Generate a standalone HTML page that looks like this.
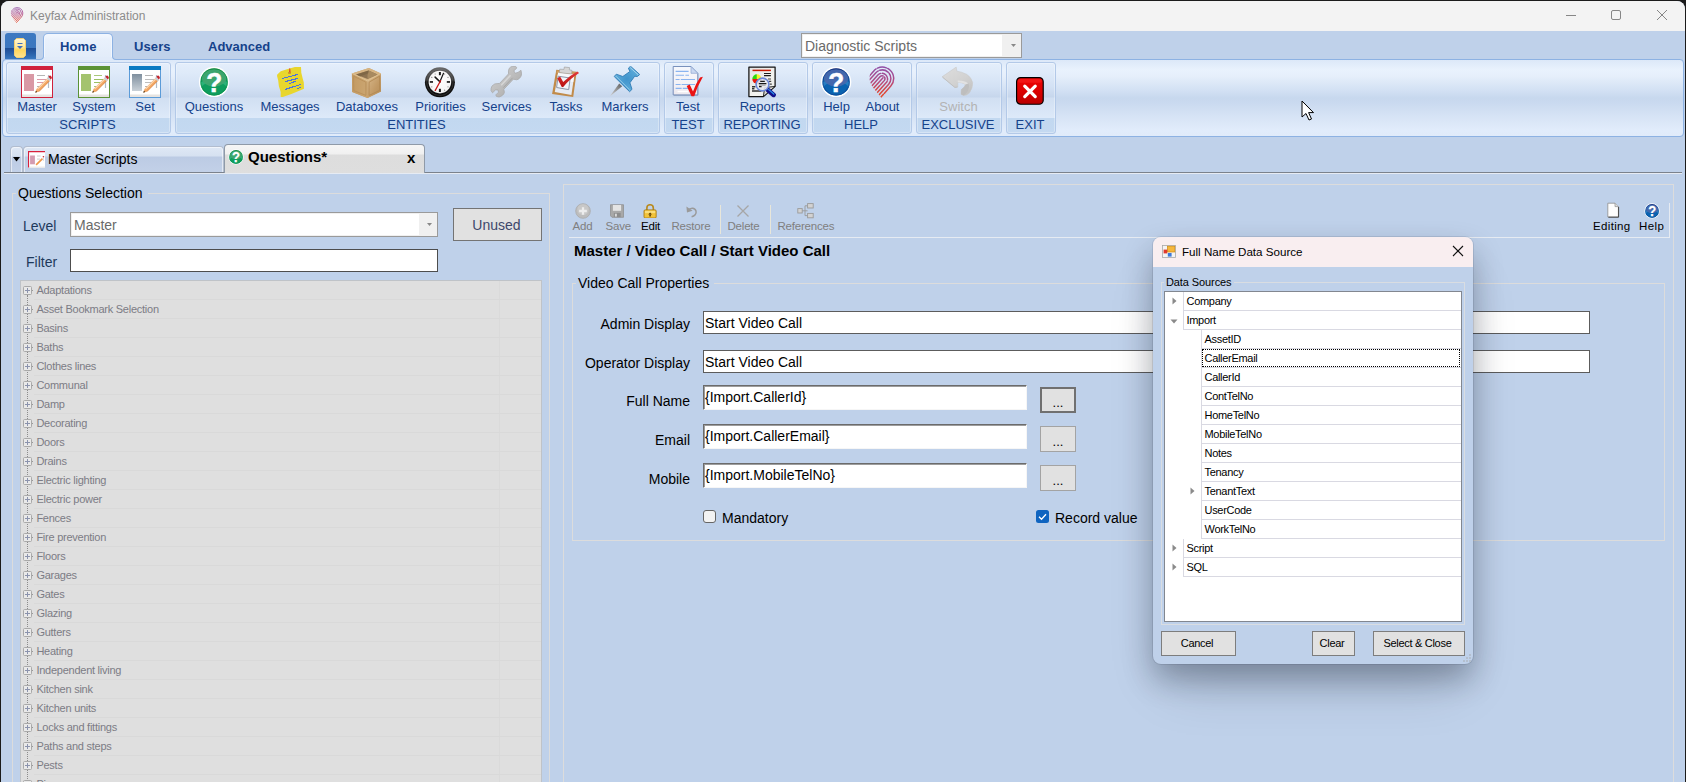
<!DOCTYPE html>
<html><head><meta charset="utf-8"><title>Keyfax Administration</title>
<style>
*{box-sizing:border-box;margin:0;padding:0}
html,body{width:1686px;height:782px;overflow:hidden;background:#1b1b1b}
body{position:relative;font-family:"Liberation Sans",sans-serif;font-size:13px;color:#000}
.a{position:absolute}
.t{position:absolute;white-space:pre;line-height:1}
#win{left:1px;top:1px;width:1684px;height:800px;background:#bfd1ea;border-radius:8px 8px 0 0;overflow:hidden}
#title{left:0;top:0;width:1684px;height:30px;background:#f3f3f3}
.rt{color:#15428b;font-size:13px}
.grp{position:absolute;top:62px;height:72px;border:1px solid #b3c9e8;border-radius:3px;box-shadow:inset 0 0 0 1px rgba(255,255,255,0.3);
 background:linear-gradient(#e4eefb 0,#deeaf9 10px,#d3e1f4 24px,#c6d6ec 34px,#d1dff2 35px,#dde9f9 55px,#c2d8f0 55px,#c4d9f1 100%)}
.gl{position:absolute;left:0;right:0;top:55px;padding-right:2px;text-align:center;font-size:13px;line-height:1;color:#15428b}
.bl{position:absolute;top:99.6px;font-size:13px;line-height:1;color:#15428b;white-space:pre;transform:translateX(-50%)}
.gb{position:absolute;border:1px solid #dcdcdc;border-radius:0}
.inp{position:absolute;background:#fff;border:1px solid #6e6e6e;font-size:14px;line-height:1;white-space:pre}
.btn{position:absolute;background:#e1e1e1;border:1px solid #adadad;text-align:center;white-space:pre}
.tv{position:absolute;font-size:11px;letter-spacing:-0.25px;color:#7c7c85;white-space:pre;line-height:1}
.tb{position:absolute;font-size:11.5px;letter-spacing:-0.2px;color:#7f7f7f;white-space:pre;line-height:1}
.dr{position:absolute;font-size:11px;letter-spacing:-0.3px;color:#000;white-space:pre;line-height:1}
</style></head>
<body>
<div id="win" class="a">
<div id="title" class="a"></div>
</div>
<svg class="a" style="left:9px;top:7px" width="16" height="16" viewBox="0 0 32 32">
<defs><linearGradient id="ab2" gradientUnits="userSpaceOnUse" x1="0" y1="0" x2="0" y2="32"><stop offset="0" stop-color="#8f4fa8"/><stop offset="0.45" stop-color="#b04a86"/><stop offset="0.75" stop-color="#d64848"/><stop offset="1" stop-color="#e84a24"/></linearGradient>
<clipPath id="abc2"><path d="M3.4 12.4L3.9 8.6L4.7 6.2L4.7 0L32 0L32 32L15.4 32L13.1 29.1L11.3 26.8L9.2 24.3L7.4 22L5.5 19.2L4.2 16Z"/></clipPath></defs>
<path clip-path="url(#abc2)" d="M-5.9 32.9L14.2 10.6A2.85 2.85 0 0 1 18.4 14.4L-1.7 36.7M-8.0 31.0L12.1 8.7A5.7 5.7 0 0 1 20.5 16.3L0.5 38.6M-10.1 29.1L9.9 6.8A8.55 8.55 0 0 1 22.7 18.2L2.6 40.5M-12.2 27.2L7.8 4.9A11.4 11.4 0 0 1 24.8 20.1L4.7 42.4M-3.8 34.8L16.8 11.9" fill="none" stroke="url(#ab2)" stroke-width="1.7" stroke-linecap="round" stroke-dasharray="33 1.6 9 1.4 30 1.5 12 1.6"/></svg>
<div class="t" style="left:30px;top:10px;font-size:12px;color:#8b8b8b">Keyfax Administration</div>
<svg class="a" style="left:1560px;top:5px" width="115" height="22" viewBox="0 0 115 22" fill="none" stroke="#868686" stroke-width="1">
<path d="M6 10.5H16"/><rect x="51.5" y="5.5" width="9" height="9" rx="1.5"/><path d="M97 5L107 15M107 5L97 15"/></svg>
<div class="a" style="left:5px;top:33px;width:31px;height:26px;border-radius:3px 3px 0 0;background:linear-gradient(#3d79c1 0,#3c77bf 15px,#1f4d94 15px,#2a62ab 21px,#3878c0 26px)"></div>
<svg class="a" style="left:13px;top:37px" width="14" height="22" viewBox="0 0 14 22">
<defs><linearGradient id="pill" x1="0" y1="0" x2="0" y2="1"><stop offset="0" stop-color="#fff6d6"/><stop offset="0.45" stop-color="#ffe79a"/><stop offset="0.6" stop-color="#ffd65c"/><stop offset="1" stop-color="#ffe490"/></linearGradient></defs>
<path d="M3.5 1.5H10.5L12.5 3.5V18.5L10.5 20.5H3.5L1.5 18.5V3.5Z" fill="url(#pill)" stroke="#f3cf74" stroke-width="1"/>
<path d="M4.5 6.5H9.5" stroke="#3f6fc0" stroke-width="1"/><path d="M4 9H10L7 12Z" fill="#3f6fc0"/></svg>
<div class="a" style="left:43px;top:33px;width:70px;height:24px;border:1px solid #8db2e3;border-bottom:none;border-radius:5px 5px 0 0;background:linear-gradient(#f4f8fe 0,#e9f1fc 6px,#e2ecf9 24px);box-shadow:inset 1px 1px 0 0 #f2f7fe,inset -1px 0 0 0 #f2f7fe"></div>
<div class="t" style="left:60px;top:40px;font-size:13px;font-weight:bold;color:#15428b;letter-spacing:0.1px">Home</div>
<div class="t" style="left:134px;top:40px;font-size:13px;font-weight:bold;color:#15428b;letter-spacing:0.1px">Users</div>
<div class="t" style="left:208px;top:40px;font-size:13px;font-weight:bold;color:#15428b;letter-spacing:0">Advanced</div>
<div class="a" style="left:801px;top:33px;width:221px;height:25px;border:1px solid #9a9a9a;background:#f0f0f0"></div>
<div class="a" style="left:803px;top:35px;width:199px;height:21px;background:#fff"></div>
<div class="t" style="left:805px;top:39px;font-size:14px;color:#6a6a6a">Diagnostic Scripts</div>
<svg class="a" style="left:1011px;top:44px" width="5" height="3"><path d="M0 0H5L2.5 3Z" fill="#888"/></svg>
<div class="a" style="left:2px;top:59px;width:1682px;height:78px;border:1px solid #8db2e3;border-radius:4px;
background:linear-gradient(#dce8f8 0,#e9f2fd 10px,#e6effb 16px,#d3e1f4 30px,#c7d8ee 38px,#c9d9ef 42px,#d6e3f5 56px,#e1ecfb 70px,#e0ebfa 76px)"></div>
<div class="a" style="left:40px;top:57px;width:76px;height:3px;background:#e1ebf9"></div>
<div class="a" style="left:40px;top:56px;width:4px;height:4px;background:#bfd1ea;border-right:1px solid #8db2e3;border-bottom:1px solid #8db2e3;border-bottom-right-radius:4px"></div>
<div class="a" style="left:112px;top:56px;width:4px;height:4px;background:#bfd1ea;border-left:1px solid #8db2e3;border-bottom:1px solid #8db2e3;border-bottom-left-radius:4px"></div>
<div class="grp" style="left:6px;width:165px"><div class="gl" style="letter-spacing:0px">SCRIPTS</div></div>
<div class="grp" style="left:175px;width:485px"><div class="gl" style="letter-spacing:0px">ENTITIES</div></div>
<div class="grp" style="left:664px;width:50px"><div class="gl" style="letter-spacing:0px">TEST</div></div>
<div class="grp" style="left:718px;width:90px"><div class="gl" style="letter-spacing:0px">REPORTING</div></div>
<div class="grp" style="left:812px;width:100px"><div class="gl" style="letter-spacing:0px">HELP</div></div>
<div class="grp" style="left:916px;width:86px"><div class="gl" style="letter-spacing:0px">EXCLUSIVE</div></div>
<div class="grp" style="left:1006px;width:50px"><div class="gl" style="letter-spacing:0px">EXIT</div></div>
<svg class="a" style="left:21px;top:66px" width="32" height="32" viewBox="0 0 32 32">
<rect x="0.5" y="0.5" width="31" height="31" fill="#fff" stroke="#d0213c"/>
<rect x="0" y="0" width="32" height="4" fill="#d0213c"/>
<rect x="1" y="28.5" width="30" height="2.5" fill="#e6e3e0"/>
<rect x="3" y="8" width="10" height="17" fill="#d999a5"/>
<path d="M16 9.5H24" stroke="#b5b5b5" stroke-width="1"/>
<path d="M16 13.5H27M16 16.5H27" stroke="#dc9ba8" stroke-width="1"/>
<path d="M16 20.5H20" stroke="#b5b5b5" stroke-width="1"/>
<path d="M27.5 9V22" stroke="#b4bcc6" stroke-width="1.2"/>
<path d="M14.3 26.7L15.5 23L26.8 11.7L29.3 14.2L18 25.5Z" fill="#f3a763"/>
<path d="M16.6 23.2L27.2 12.6" stroke="#fbd9b5" stroke-width="1.2"/>
<path d="M17.9 25.6L29 14.4" stroke="#d9803c" stroke-width="0.8"/>
<path d="M14.3 26.7L14.9 24.8L16.2 26.1Z" fill="#3a2a1a"/>
<path d="M25.8 12.4L27.2 11L30 13.8L28.6 15.2Z" fill="#c9ced6"/>
<path d="M27.4 10.8L28.4 9.8Q29.4 9.2 30.4 10.4Q31.4 11.6 30.6 12.6L29.8 13.6Z" fill="#c4242c"/>
</svg>
<div class="bl" style="left:37px">Master</div>
<svg class="a" style="left:78px;top:66px" width="32" height="32" viewBox="0 0 32 32">
<rect x="0.5" y="0.5" width="31" height="31" fill="#fff" stroke="#5a9236"/>
<rect x="0" y="0" width="32" height="4" fill="#5a9236"/>
<rect x="1" y="28.5" width="30" height="2.5" fill="#e6e3e0"/>
<rect x="3" y="8" width="10" height="17" fill="#a4c36e"/>
<path d="M16 9.5H24" stroke="#a9c77a" stroke-width="1"/>
<path d="M16 13.5H27M16 16.5H27" stroke="#9bc062" stroke-width="1"/>
<path d="M16 20.5H20" stroke="#a9c77a" stroke-width="1"/>
<path d="M27.5 9V22" stroke="#b4bcc6" stroke-width="1.2"/>
<path d="M14.3 26.7L15.5 23L26.8 11.7L29.3 14.2L18 25.5Z" fill="#f3a763"/>
<path d="M16.6 23.2L27.2 12.6" stroke="#fbd9b5" stroke-width="1.2"/>
<path d="M17.9 25.6L29 14.4" stroke="#d9803c" stroke-width="0.8"/>
<path d="M14.3 26.7L14.9 24.8L16.2 26.1Z" fill="#3a2a1a"/>
<path d="M25.8 12.4L27.2 11L30 13.8L28.6 15.2Z" fill="#c9ced6"/>
<path d="M27.4 10.8L28.4 9.8Q29.4 9.2 30.4 10.4Q31.4 11.6 30.6 12.6L29.8 13.6Z" fill="#c4242c"/>
</svg>
<div class="bl" style="left:94px">System</div>
<svg class="a" style="left:129px;top:66px" width="32" height="32" viewBox="0 0 32 32"><defs><linearGradient id="bgs" x1="0" y1="0" x2="0" y2="1"><stop offset="0" stop-color="#7f8f9e"/><stop offset="1" stop-color="#c9d1d8"/></linearGradient></defs>
<rect x="0.5" y="0.5" width="31" height="31" fill="#fff" stroke="#5b9bd8"/>
<rect x="0" y="0" width="32" height="4" fill="#0a7ac2"/>
<rect x="1" y="28.5" width="30" height="2.5" fill="#e6e3e0"/>
<rect x="3" y="8" width="10" height="17" fill="url(#bgs)"/>
<path d="M16 9.5H24" stroke="#b5b5b5" stroke-width="1"/>
<path d="M16 13.5H27M16 16.5H27" stroke="#bdbdbd" stroke-width="1"/>
<path d="M16 20.5H20" stroke="#b5b5b5" stroke-width="1"/>
<path d="M27.5 9V22" stroke="#b4bcc6" stroke-width="1.2"/>
<path d="M14.3 26.7L15.5 23L26.8 11.7L29.3 14.2L18 25.5Z" fill="#f3a763"/>
<path d="M16.6 23.2L27.2 12.6" stroke="#fbd9b5" stroke-width="1.2"/>
<path d="M17.9 25.6L29 14.4" stroke="#d9803c" stroke-width="0.8"/>
<path d="M14.3 26.7L14.9 24.8L16.2 26.1Z" fill="#3a2a1a"/>
<path d="M25.8 12.4L27.2 11L30 13.8L28.6 15.2Z" fill="#c9ced6"/>
<path d="M27.4 10.8L28.4 9.8Q29.4 9.2 30.4 10.4Q31.4 11.6 30.6 12.6L29.8 13.6Z" fill="#c4242c"/>
</svg>
<div class="bl" style="left:145px">Set</div>
<svg class="a" style="left:198px;top:66px" width="32" height="32" viewBox="0 0 32 32">
<defs><linearGradient id="qgg" x1="0" y1="0" x2="0" y2="1"><stop offset="0" stop-color="#128a3e"/><stop offset="0.18" stop-color="#0f9d5e"/><stop offset="1" stop-color="#0f9d5e"/></linearGradient>
<clipPath id="qgc"><circle cx="16.1" cy="15.9" r="13.7"/></clipPath></defs>
<circle cx="16.1" cy="15.9" r="15.2" fill="#fefefe"/>
<circle cx="16.1" cy="15.9" r="13.7" fill="url(#qgg)"/>
<g clip-path="url(#qgc)"><ellipse cx="16.1" cy="18.9" rx="15.0" ry="5.5" fill="#35b983" opacity="0.75"/>
<ellipse cx="16.1" cy="22.9" rx="13.0" ry="7.0" fill="#0f9d5e"/>
<ellipse cx="16.1" cy="11.9" rx="12.3" ry="8.6" fill="#3fa56f" opacity="0.95"/>
<circle cx="16.1" cy="15.9" r="13.299999999999999" fill="none" stroke="#128a3e" stroke-width="0.9" opacity="0.55"/></g>
<text x="16.3" y="26" text-anchor="middle" font-family="Liberation Sans, sans-serif" font-weight="bold" font-size="28.5" fill="#fff" stroke="#fff" stroke-width="0.5" transform="translate(16.3 0) scale(0.92 1) translate(-16.3 0)">?</text></svg>
<div class="bl" style="left:214px">Questions</div>
<svg class="a" style="left:274px;top:66px" width="32" height="32" viewBox="0 0 32 32">
<path d="M3.1 8.8L6.7 5.3L13.8 3.1L20.9 1.1L27 1L27.3 6.7L28.7 12.4L29.8 16.6L30 22.7L25.9 24.5L17.4 28L8.8 30.9L6.7 30.9L6.7 25.9L4.9 20.2L4.2 14.5L3.1 10.2Z" fill="#e8d62e"/>
<g stroke="#4a72e0" stroke-width="1.15" fill="none" shape-rendering="crispEdges">
<path d="M8.1 12.5L23.8 8.5"/><path d="M10.9 15.6L23.8 12.5"/><path d="M15.2 17.6L21.6 15.4"/><path d="M11.3 23.4L27 18.4"/><path d="M23.4 22.7L27 21.3"/></g>
<path d="M15.4 2.2L16.2 2.6L16.6 6.6L15 6.6Z" fill="#e0382c"/><rect x="14.2" y="6" width="2.6" height="1.8" fill="#c88a28"/></svg>
<div class="bl" style="left:290px">Messages</div>
<svg class="a" style="left:351px;top:66px" width="32" height="32" viewBox="0 0 32 32">
<defs><linearGradient id="bxr" x1="0" y1="0" x2="1" y2="1"><stop offset="0" stop-color="#d9ba8e"/><stop offset="0.6" stop-color="#c29a66"/><stop offset="1" stop-color="#b48c58"/></linearGradient>
<linearGradient id="bxl" x1="0" y1="0" x2="1" y2="0"><stop offset="0" stop-color="#c39a62"/><stop offset="1" stop-color="#cba672"/></linearGradient></defs>
<path d="M0.9 7.4L17.9 2L30 7.4L30 25.5L16.5 31.9L1.2 25.9Z" fill="#c8a06a"/>
<path d="M0.9 7.4L17.9 2L30 7.4L16.5 14.9Z" fill="#d6b483"/>
<path d="M5.1 8.6L17.6 4.5L26.5 8.4L16.5 13.1Z" fill="#8d7250"/>
<path d="M17.6 4.5L26.5 8.4L16.5 13.1L16.5 9.5Z" fill="#a88a60"/>
<path d="M5.1 8.6L17.6 4.5L17.2 7.2L9 10.4Z" fill="#7c6444" opacity="0.8"/>
<path d="M0.9 7.4L16.5 14.9L16.5 31.9L1.2 25.9Z" fill="url(#bxl)"/>
<path d="M16.5 14.9L30 7.4L30 25.5L16.5 31.9Z" fill="url(#bxr)"/>
<path d="M2.6 10.2L14.9 16.2L14.9 29.4L2.8 24.6Z" fill="none" stroke="#b88e58" stroke-width="0.8"/>
<path d="M18.1 16.2L28.6 10.2L28.6 24.4L18.1 29.4Z" fill="none" stroke="#b18852" stroke-width="0.8"/>
<path d="M0.9 7.4L16.5 14.9L30 7.4" fill="none" stroke="#e0c496" stroke-width="0.9"/>
</svg>
<div class="bl" style="left:367px">Databoxes</div>
<svg class="a" style="left:424px;top:66px" width="32" height="32" viewBox="0 0 32 32">
<defs><linearGradient id="clr" x1="0" y1="0" x2="0" y2="1"><stop offset="0" stop-color="#6a6a6a"/><stop offset="0.42" stop-color="#3a3a3a"/><stop offset="0.48" stop-color="#151515"/><stop offset="1" stop-color="#0c0c0c"/></linearGradient>
<radialGradient id="clk" cx="0.5" cy="0.45" r="0.6"><stop offset="0" stop-color="#ffffff"/><stop offset="0.8" stop-color="#f6f6f6"/><stop offset="1" stop-color="#d6d6d6"/></radialGradient></defs>
<circle cx="15.9" cy="16.3" r="15" fill="url(#clr)"/>
<circle cx="15.9" cy="16.3" r="13.2" fill="none" stroke="#8a8a8a" stroke-width="0.5" opacity="0.5"/>
<circle cx="15.9" cy="16.1" r="11.3" fill="url(#clk)"/>
<g fill="#1c1c1c"><rect x="14.9" y="6" width="2" height="3.2"/><rect x="14.9" y="22.8" width="2" height="3.2"/><rect x="5.8" y="15.1" width="3.2" height="1.7"/><rect x="22.8" y="15.1" width="3.2" height="1.7"/></g>
<g fill="#8a8a8a"><circle cx="11.2" cy="8" r="0.6"/><circle cx="20.6" cy="8" r="0.6"/><circle cx="7.8" cy="11.4" r="0.6"/><circle cx="24" cy="11.4" r="0.6"/><circle cx="7.8" cy="20.8" r="0.6"/><circle cx="24" cy="20.8" r="0.6"/><circle cx="11.2" cy="24.2" r="0.6"/><circle cx="20.6" cy="24.2" r="0.6"/></g>
<path d="M15.9 15.7L11.1 11.1" stroke="#151515" stroke-width="1.5" stroke-linecap="round"/><path d="M15.9 15.7L19.5 7.3" stroke="#151515" stroke-width="1.2" stroke-linecap="round"/>
<path d="M16.6 14.6L11.3 24.4" stroke="#c81818" stroke-width="1.2" stroke-linecap="round"/><circle cx="16" cy="15.7" r="0.9" fill="#a01414"/></svg>
<div class="bl" style="left:440.5px">Priorities</div>
<svg class="a" style="left:490px;top:66px" width="32" height="32" viewBox="0 0 32 32">
<defs><linearGradient id="wr" x1="0" y1="0" x2="1" y2="1"><stop offset="0" stop-color="#d2d2d2"/><stop offset="0.5" stop-color="#bdbdbd"/><stop offset="1" stop-color="#a3a3a3"/></linearGradient></defs>
<path d="M19.1 2.5Q20.4 0.9 22.1 0.4L25.7 0.4L26.8 1.9L23.9 4.9L25.1 7.3L28 6.4L31 4.3L31.6 7.9Q31.4 10.4 29.8 12Q28.4 13.4 26.8 13.8L23.3 13.2L13.8 23.3L14.4 26.2Q14 28 12.6 29.2Q10.8 30.6 9 31L6.4 30.4L5.8 28.9L8.5 26.2L7.9 23.9L5.5 23.9L2.5 26.8L1 24.5Q0.9 22 1.9 20.3Q3.2 18.6 4.9 17.9L9.6 17.4L18.5 7.9Q18.2 5 19.1 2.5Z" fill="url(#wr)" stroke="#a9a9a9" stroke-width="0.8"/>
<path d="M11.2 19.2L20.6 9.2" stroke="#d9d9d9" stroke-width="1.6" opacity="0.9"/><path d="M13.4 21.6L22.6 11.8" stroke="#9d9d9d" stroke-width="1" opacity="0.7"/></svg>
<div class="bl" style="left:506.5px">Services</div>
<svg class="a" style="left:550px;top:66px" width="32" height="32" viewBox="0 0 32 32">
<defs><linearGradient id="tkr" x1="0" y1="0" x2="0" y2="1"><stop offset="0" stop-color="#e23a3a"/><stop offset="1" stop-color="#b80f0f"/></linearGradient></defs>
<path d="M6.3 3.7L26.7 5.8L23.2 31L2.1 28Z" fill="#c18b4a"/>
<path d="M6.9 4.4L26 6.4L25.6 9L6.6 7Z" fill="#d3a365" opacity="0.8"/>
<path d="M8.1 6.7L24.4 8.5L21.4 28.9L4.8 26Z" fill="#e6ebf4"/>
<path d="M8.1 6.7L24.4 8.5L23.3 16L6.9 14Z" fill="#f7f9fc"/>
<path d="M14.3 1L19.6 1.6L19.3 3.8L22 4.4L21.6 8L9.3 6.6L9.7 3.2L14 3.4Z" fill="#d6d6d6" stroke="#9a9a9a" stroke-width="0.6"/>
<path d="M8.1 10.2L20.2 12L18.7 23.6L6.6 21.5Z" fill="#f1f4f9" stroke="#8d97a8" stroke-width="1"/>
<path d="M7.2 12.2L10.1 10.6L13.2 16Q20 9.4 27.3 5.5L29.1 7Q19.4 13.2 13 21.2L11.6 20.8Z" fill="url(#tkr)"/></svg>
<div class="bl" style="left:566px">Tasks</div>
<svg class="a" style="left:609px;top:66px" width="32" height="32" viewBox="0 0 32 32">
<defs><radialGradient id="pn" cx="0.5" cy="0.5" r="0.6"><stop offset="0" stop-color="#3f93cc"/><stop offset="0.7" stop-color="#5aa9d8"/><stop offset="1" stop-color="#9fd0ea"/></radialGradient>
<linearGradient id="pnn" x1="1" y1="0" x2="0" y2="1"><stop offset="0" stop-color="#5e5e5e"/><stop offset="1" stop-color="#d4d4d4"/></linearGradient></defs>
<path d="M10.2 17.4L13.2 20.3L0.7 30.4Z" fill="url(#pnn)"/>
<path d="M21.5 0.2L30.7 8.5L28.3 10.5L25.7 10.2L20.9 16.8L23 23.3L20.6 25.7L5.2 10.5L7.3 8.2L13.8 10.5L20.9 5.5L19.4 2.2Z" fill="url(#pn)" stroke="#2f7ab4" stroke-width="0.9" stroke-linejoin="round"/>
<path d="M21.4 1.8L29 8.6" stroke="#b8e0f4" stroke-width="0.9" opacity="0.9"/><path d="M7 10.2L20.4 23.6" stroke="#b8e0f4" stroke-width="0.8" opacity="0.8"/></svg>
<div class="bl" style="left:625px">Markers</div>
<svg class="a" style="left:672px;top:66px" width="32" height="32" viewBox="0 0 32 32">
<defs><linearGradient id="tsd" x1="0" y1="0" x2="0" y2="1"><stop offset="0" stop-color="#f6f8fd"/><stop offset="0.6" stop-color="#f4f2f6"/><stop offset="1" stop-color="#ece8ee"/></linearGradient></defs>
<path d="M1.8 1.4L19 1.4L26.2 8.2L26.2 29.6L1.8 29.6Z" fill="#4a5f88" opacity="0.55"/>
<path d="M1.2 0.5L19 0.5L25.8 7.3L25.8 28.9L1.2 28.9Z" fill="url(#tsd)" stroke="#6c86b4" stroke-width="0.9"/>
<path d="M19 0.5L19 7.3L25.8 7.3Z" fill="#c9d8f2" stroke="#8ea6d0" stroke-width="0.7"/>
<g stroke="#8ab4f0" stroke-width="1.1"><path d="M3.6 5.4H16.6M3.6 9.3H12M13.4 9.3H17M3.6 13.5H7.6M8.8 13.5H23M3.6 18.5H8.6M9.6 18.5H23M3.6 22.4H9.6M10.8 22.4H17"/></g>
<path d="M5.5 25.5H16" stroke="#fff" stroke-width="1.4"/>
<path d="M14.7 20.1L17.7 18.5L21 25.4Q24.2 17 28 11.6L30.9 10.8Q25.2 20.6 22.2 30.3L19.5 30.3Z" fill="#ea1212"/></svg>
<div class="bl" style="left:688px">Test</div>
<svg class="a" style="left:746px;top:66px" width="32" height="32" viewBox="0 0 32 32">
<defs><linearGradient id="rpd" x1="0" y1="0" x2="1" y2="1"><stop offset="0" stop-color="#e2e2e2"/><stop offset="0.6" stop-color="#f3f3ef"/><stop offset="1" stop-color="#e9e9e4"/></linearGradient></defs>
<path d="M2.9 1.1L29.1 1.1L29.1 20.4L17.4 30.6L2.9 30.6Z" fill="url(#rpd)" stroke="#141414" stroke-width="1.25" stroke-linejoin="round"/>
<path d="M29.1 20.4L18.6 21.6L17.4 30.6Z" fill="#d4d4d0" stroke="#141414" stroke-width="0.9"/>
<path d="M6.5 4.4H24.9" stroke="#c81800" stroke-width="1.5"/>
<path d="M18 7.5H24.9M18 9.6H24.9" stroke="#1c1c1c" stroke-width="1.1"/>
<path d="M22 13H25M22.6 15.4H25.2M23.6 18.2H25.8" stroke="#444" stroke-width="1.2"/>
<path d="M6 20.8H9.4M6 22.8H8.4M6 25H15.5" stroke="#333" stroke-width="1.5"/>
<path d="M10.9 12.9V8.3A4.6 4.6 0 0 0 6.3 12.9Z" fill="#2bd80a"/><path d="M10.9 12.9V8.3A4.6 4.6 0 0 1 15.5 12.9Z" fill="#f4f424"/><path d="M6.3 12.9A4.6 4.6 0 0 0 15.5 12.9Z" fill="#ea1a0a"/>
<path d="M21.9 23.9L27.6 28.9" stroke="#10108a" stroke-width="4.6" stroke-linecap="round"/><path d="M22.6 23.6L27.8 28" stroke="#2a8ae8" stroke-width="1.3" stroke-linecap="round"/>
<circle cx="16.5" cy="18.5" r="6.4" fill="#e6e8ee" fill-opacity="0.92" stroke="#6a86d8" stroke-width="1.6"/>
<path d="M14.2 15.4H18.8M12.8 17.6H20.4M13 20.6H15.6" stroke="#1a1a1a" stroke-width="1.3"/><path d="M13 19.2H19.6" stroke="#9a9a9a" stroke-width="1"/></svg>
<div class="bl" style="left:762.5px">Reports</div>
<svg class="a" style="left:820px;top:66px" width="32" height="32" viewBox="0 0 32 32">
<defs><linearGradient id="hgg" x1="0" y1="0" x2="0" y2="1"><stop offset="0" stop-color="#1a2f7a"/><stop offset="0.18" stop-color="#0a63b0"/><stop offset="1" stop-color="#0a63b0"/></linearGradient>
<clipPath id="hgc"><circle cx="16.1" cy="15.9" r="13.7"/></clipPath></defs>
<circle cx="16.1" cy="15.9" r="15.2" fill="#fefefe"/>
<circle cx="16.1" cy="15.9" r="13.7" fill="url(#hgg)"/>
<g clip-path="url(#hgc)"><ellipse cx="16.1" cy="18.9" rx="15.0" ry="5.5" fill="#2f86c8" opacity="0.75"/>
<ellipse cx="16.1" cy="22.9" rx="13.0" ry="7.0" fill="#0a63b0"/>
<ellipse cx="16.1" cy="11.9" rx="12.3" ry="8.6" fill="#4668ad" opacity="0.95"/>
<circle cx="16.1" cy="15.9" r="13.299999999999999" fill="none" stroke="#1a2f7a" stroke-width="0.9" opacity="0.55"/></g>
<text x="16.3" y="26" text-anchor="middle" font-family="Liberation Sans, sans-serif" font-weight="bold" font-size="28.5" fill="#fff" stroke="#fff" stroke-width="0.5" transform="translate(16.3 0) scale(0.92 1) translate(-16.3 0)">?</text></svg>
<div class="bl" style="left:836.5px">Help</div>
<svg class="a" style="left:866px;top:66px" width="32" height="32" viewBox="0 0 32 32">
<defs><linearGradient id="ab" gradientUnits="userSpaceOnUse" x1="0" y1="0" x2="0" y2="32"><stop offset="0" stop-color="#8f4fa8"/><stop offset="0.45" stop-color="#b04a86"/><stop offset="0.75" stop-color="#d64848"/><stop offset="1" stop-color="#e84a24"/></linearGradient>
<clipPath id="abc"><path d="M3.4 12.4L3.9 8.6L4.7 6.2L4.7 0L32 0L32 32L15.4 32L13.1 29.1L11.3 26.8L9.2 24.3L7.4 22L5.5 19.2L4.2 16Z"/></clipPath></defs>
<path clip-path="url(#abc)" d="M-5.9 32.9L14.2 10.6A2.85 2.85 0 0 1 18.4 14.4L-1.7 36.7M-8.0 31.0L12.1 8.7A5.7 5.7 0 0 1 20.5 16.3L0.5 38.6M-10.1 29.1L9.9 6.8A8.55 8.55 0 0 1 22.7 18.2L2.6 40.5M-12.2 27.2L7.8 4.9A11.4 11.4 0 0 1 24.8 20.1L4.7 42.4M-3.8 34.8L16.8 11.9" fill="none" stroke="url(#ab)" stroke-width="1.5" stroke-linecap="round" stroke-dasharray="33 1.6 9 1.4 30 1.5 12 1.6"/></svg>
<div class="bl" style="left:882.5px">About</div>
<svg class="a" style="left:942px;top:66px" width="32" height="32" viewBox="0 0 32 32">
<defs><linearGradient id="sw" x1="0" y1="0" x2="0.6" y2="1"><stop offset="0" stop-color="#dedede"/><stop offset="0.6" stop-color="#d2d2d2"/><stop offset="1" stop-color="#c4c4c4"/></linearGradient></defs>
<path d="M0.1 10.8L14.2 1.1L14.9 5.2Q19 5.6 24.6 8.3Q29.2 11 30.6 16.5Q31 22 27.2 27.2Q24.6 29.4 21.6 29.5L19 28.2L19.3 23.6Q22.4 21.4 23.6 18.5Q20.6 16.4 15.7 16.2L15.7 21.1L12.9 21.6Z" fill="url(#sw)" stroke="#c9c9c9" stroke-width="0.6" stroke-linejoin="round"/>
<path d="M23.6 18.5Q25.4 17.4 26.6 17.6Q27.8 21.4 25.4 25.6Q23.6 28.4 21.6 29.5L19 28.2L19.3 23.6Q22.4 21.4 23.6 18.5Z" fill="#bcbcbc" opacity="0.85"/>
<path d="M15.7 16.2Q20.6 16.4 23.6 18.5Q25.4 17.4 26.6 17.6Q22.6 14.4 15.7 14.6Z" fill="#e6e6e6" opacity="0.8"/>
<path d="M0.6 11.2L12.9 21.4L15.5 21" fill="none" stroke="#bdbdbd" stroke-width="0.8"/></svg>
<div class="bl" style="left:958.5px;color:#b3b3b3">Switch</div>
<svg class="a" style="left:1016px;top:77px" width="28.2" height="28.2" viewBox="0 0 29 29">
<defs><linearGradient id="ex" x1="0" y1="0" x2="0" y2="1"><stop offset="0" stop-color="#ee0505"/><stop offset="0.55" stop-color="#da0000"/><stop offset="1" stop-color="#b80000"/></linearGradient></defs>
<rect x="0.6" y="0.6" width="27.4" height="27.4" rx="4.2" fill="url(#ex)" stroke="#000" stroke-width="1.2"/>
<rect x="2" y="2" width="24.6" height="4" rx="2.5" fill="#ff2a2a" opacity="0.45"/>
<path d="M9 9.4L19.8 20.2M19.8 9.4L9 20.2" stroke="#fff" stroke-width="3.3" stroke-linecap="round"/></svg>
<div class="a" style="left:4px;top:172px;width:1678px;height:1px;background:#7b828c"></div>
<div class="a" style="left:4px;top:173px;width:1678px;height:1px;background:#e6ebf3"></div>
<div class="a" style="left:10px;top:146px;width:13px;height:26px;border:1px solid #b2bdcf;border-bottom:none;border-radius:4px 4px 0 0;box-shadow:inset 1px 1px 0 rgba(255,255,255,0.55),inset -1px 0 0 rgba(255,255,255,0.55);background:linear-gradient(#dfe8f5 0,#d6e1f1 9px,#bccbe4 10px,#c3d1e8 26px)"></div>
<svg class="a" style="left:13px;top:157px" width="7" height="5"><path d="M0 0H7L3.5 4.5Z" fill="#000"/></svg>
<div class="a" style="left:23px;top:146px;width:201px;height:26px;border:1px solid #b2bdcf;border-bottom:none;border-radius:4px 4px 0 0;box-shadow:inset 1px 1px 0 rgba(255,255,255,0.55),inset -1px 0 0 rgba(255,255,255,0.55);background:linear-gradient(#dfe8f5 0,#d6e1f1 9px,#bccbe4 10px,#c3d1e8 26px)"></div>
<svg class="a" style="left:28px;top:151.4px" width="17" height="17" viewBox="0 0 17 17">
<rect x="0" y="0" width="17" height="16.6" fill="#fff"/><rect x="0" y="15.6" width="17" height="1" fill="#ece8e4"/>
<path d="M0.5 16.6V0.7H17" fill="none" stroke="#d8213c" stroke-width="1.2"/>
<rect x="2.1" y="4.5" width="4.8" height="8.8" fill="#d49bb0"/><path d="M9 5H12.5M9 8.1H12" stroke="#c9c9c9" stroke-width="0.9"/>
<path d="M8.1 13.8L14.5 7.6" stroke="#f0984a" stroke-width="1.7"/><circle cx="15.4" cy="5.8" r="0.8" fill="#c4242c"/><path d="M15.4 7V10" stroke="#c9ced6" stroke-width="0.7"/></svg>
<div class="t" style="left:48px;top:152px;font-size:14px;color:#000">Master Scripts</div>
<div class="a" style="left:224px;top:144px;width:201px;height:29px;border:1px solid #8f9aa8;border-bottom:none;border-radius:4px 4px 0 0;background:linear-gradient(#f6f6f6 0,#f0f0f0 9px,#dddddd 10px,#dedede 29px)"></div>
<svg class="a" style="left:228.4px;top:149.4px" width="16" height="16" viewBox="0 0 16 16">
<defs><linearGradient id="q16g" x1="0" y1="0" x2="0" y2="1"><stop offset="0" stop-color="#128a3e"/><stop offset="0.18" stop-color="#0f9d5e"/><stop offset="1" stop-color="#0f9d5e"/></linearGradient>
<clipPath id="q16c"><circle cx="8.05" cy="7.95" r="6.85"/></clipPath></defs>
<circle cx="8.05" cy="7.95" r="7.6" fill="#fefefe"/>
<circle cx="8.05" cy="7.95" r="6.85" fill="url(#q16g)"/>
<g clip-path="url(#q16c)"><ellipse cx="8.05" cy="9.45" rx="7.5" ry="2.75" fill="#35b983" opacity="0.75"/>
<ellipse cx="8.05" cy="11.45" rx="6.5" ry="3.5" fill="#0f9d5e"/>
<ellipse cx="8.05" cy="5.95" rx="6.15" ry="4.3" fill="#3fa56f" opacity="0.95"/>
<circle cx="8.05" cy="7.95" r="6.6499999999999995" fill="none" stroke="#128a3e" stroke-width="0.45" opacity="0.55"/></g>
<text x="8.15" y="13.2" text-anchor="middle" font-family="Liberation Sans, sans-serif" font-weight="bold" font-size="14.3" fill="#fff" stroke="#fff" stroke-width="0.25" transform="translate(8.15 0) scale(0.92 1) translate(-8.15 0)">?</text></svg>
<div class="t" style="left:248px;top:149px;font-size:15px;font-weight:bold;color:#000">Questions*</div>
<div class="t" style="left:407px;top:150px;font-size:15px;font-weight:bold;color:#000">x</div>
<div class="gb" style="left:12px;top:193px;width:538px;height:620px"></div>
<div class="t" style="left:16px;top:186px;font-size:14px;background:#bfd1ea;padding:0 5px 0 2px;height:15px">Questions Selection</div>
<div class="t" style="left:23px;top:219px;font-size:14px;color:#1e395b">Level</div>
<div class="a" style="left:70px;top:212px;width:368px;height:25px;border:1px solid #9a9a9a;background:#f0f0f0"></div>
<div class="a" style="left:72px;top:214px;width:347px;height:21px;background:#fff"></div>
<div class="t" style="left:74px;top:218px;font-size:14px;color:#6a6a6a">Master</div>
<svg class="a" style="left:427px;top:223px" width="5" height="3"><path d="M0 0H5L2.5 3Z" fill="#888"/></svg>
<div class="btn" style="left:453px;top:208px;width:89px;height:33px;font-size:14px;line-height:33px;color:#3d476b;border-color:#747474;padding-right:2px">Unused</div>
<div class="t" style="left:26px;top:255px;font-size:14px;color:#1e395b">Filter</div>
<div class="inp" style="left:70px;top:249px;width:368px;height:23px;border-color:#4d4d4d"></div>
<div class="a" style="left:20px;top:280px;width:522px;height:520px;background:#dfdfdf;border:1px solid #bfc3c8"></div>
<div class="a" style="left:27px;top:295px;width:0;height:500px;border-left:1px dotted #8c8c8c"></div>
<div class="a" style="left:499px;top:281px;width:1px;height:510px;background:#dadada"></div>
<div class="a" style="left:34px;top:299px;width:507px;height:1px;background:#d9d9d9"></div>
<svg class="a" style="left:23px;top:286px" width="11" height="9"><rect x="0.5" y="0.5" width="8" height="8" rx="1" fill="#e9e9e9" stroke="#a9a9a9"/><path d="M2 4.5H7M4.5 2V7" stroke="#8b93ad"/><path d="M9 4.5H11" stroke="#9a9a9a" stroke-dasharray="1 1"/></svg>
<div class="tv" style="left:36.4px;top:285px">Adaptations</div>
<div class="a" style="left:34px;top:318px;width:507px;height:1px;background:#d9d9d9"></div>
<svg class="a" style="left:23px;top:305px" width="11" height="9"><rect x="0.5" y="0.5" width="8" height="8" rx="1" fill="#e9e9e9" stroke="#a9a9a9"/><path d="M2 4.5H7M4.5 2V7" stroke="#8b93ad"/><path d="M9 4.5H11" stroke="#9a9a9a" stroke-dasharray="1 1"/></svg>
<div class="tv" style="left:36.4px;top:304px">Asset Bookmark Selection</div>
<div class="a" style="left:34px;top:337px;width:507px;height:1px;background:#d9d9d9"></div>
<svg class="a" style="left:23px;top:324px" width="11" height="9"><rect x="0.5" y="0.5" width="8" height="8" rx="1" fill="#e9e9e9" stroke="#a9a9a9"/><path d="M2 4.5H7M4.5 2V7" stroke="#8b93ad"/><path d="M9 4.5H11" stroke="#9a9a9a" stroke-dasharray="1 1"/></svg>
<div class="tv" style="left:36.4px;top:323px">Basins</div>
<div class="a" style="left:34px;top:356px;width:507px;height:1px;background:#d9d9d9"></div>
<svg class="a" style="left:23px;top:343px" width="11" height="9"><rect x="0.5" y="0.5" width="8" height="8" rx="1" fill="#e9e9e9" stroke="#a9a9a9"/><path d="M2 4.5H7M4.5 2V7" stroke="#8b93ad"/><path d="M9 4.5H11" stroke="#9a9a9a" stroke-dasharray="1 1"/></svg>
<div class="tv" style="left:36.4px;top:342px">Baths</div>
<div class="a" style="left:34px;top:375px;width:507px;height:1px;background:#d9d9d9"></div>
<svg class="a" style="left:23px;top:362px" width="11" height="9"><rect x="0.5" y="0.5" width="8" height="8" rx="1" fill="#e9e9e9" stroke="#a9a9a9"/><path d="M2 4.5H7M4.5 2V7" stroke="#8b93ad"/><path d="M9 4.5H11" stroke="#9a9a9a" stroke-dasharray="1 1"/></svg>
<div class="tv" style="left:36.4px;top:361px">Clothes lines</div>
<div class="a" style="left:34px;top:394px;width:507px;height:1px;background:#d9d9d9"></div>
<svg class="a" style="left:23px;top:381px" width="11" height="9"><rect x="0.5" y="0.5" width="8" height="8" rx="1" fill="#e9e9e9" stroke="#a9a9a9"/><path d="M2 4.5H7M4.5 2V7" stroke="#8b93ad"/><path d="M9 4.5H11" stroke="#9a9a9a" stroke-dasharray="1 1"/></svg>
<div class="tv" style="left:36.4px;top:380px">Communal</div>
<div class="a" style="left:34px;top:413px;width:507px;height:1px;background:#d9d9d9"></div>
<svg class="a" style="left:23px;top:400px" width="11" height="9"><rect x="0.5" y="0.5" width="8" height="8" rx="1" fill="#e9e9e9" stroke="#a9a9a9"/><path d="M2 4.5H7M4.5 2V7" stroke="#8b93ad"/><path d="M9 4.5H11" stroke="#9a9a9a" stroke-dasharray="1 1"/></svg>
<div class="tv" style="left:36.4px;top:399px">Damp</div>
<div class="a" style="left:34px;top:432px;width:507px;height:1px;background:#d9d9d9"></div>
<svg class="a" style="left:23px;top:419px" width="11" height="9"><rect x="0.5" y="0.5" width="8" height="8" rx="1" fill="#e9e9e9" stroke="#a9a9a9"/><path d="M2 4.5H7M4.5 2V7" stroke="#8b93ad"/><path d="M9 4.5H11" stroke="#9a9a9a" stroke-dasharray="1 1"/></svg>
<div class="tv" style="left:36.4px;top:418px">Decorating</div>
<div class="a" style="left:34px;top:451px;width:507px;height:1px;background:#d9d9d9"></div>
<svg class="a" style="left:23px;top:438px" width="11" height="9"><rect x="0.5" y="0.5" width="8" height="8" rx="1" fill="#e9e9e9" stroke="#a9a9a9"/><path d="M2 4.5H7M4.5 2V7" stroke="#8b93ad"/><path d="M9 4.5H11" stroke="#9a9a9a" stroke-dasharray="1 1"/></svg>
<div class="tv" style="left:36.4px;top:437px">Doors</div>
<div class="a" style="left:34px;top:470px;width:507px;height:1px;background:#d9d9d9"></div>
<svg class="a" style="left:23px;top:457px" width="11" height="9"><rect x="0.5" y="0.5" width="8" height="8" rx="1" fill="#e9e9e9" stroke="#a9a9a9"/><path d="M2 4.5H7M4.5 2V7" stroke="#8b93ad"/><path d="M9 4.5H11" stroke="#9a9a9a" stroke-dasharray="1 1"/></svg>
<div class="tv" style="left:36.4px;top:456px">Drains</div>
<div class="a" style="left:34px;top:489px;width:507px;height:1px;background:#d9d9d9"></div>
<svg class="a" style="left:23px;top:476px" width="11" height="9"><rect x="0.5" y="0.5" width="8" height="8" rx="1" fill="#e9e9e9" stroke="#a9a9a9"/><path d="M2 4.5H7M4.5 2V7" stroke="#8b93ad"/><path d="M9 4.5H11" stroke="#9a9a9a" stroke-dasharray="1 1"/></svg>
<div class="tv" style="left:36.4px;top:475px">Electric lighting</div>
<div class="a" style="left:34px;top:508px;width:507px;height:1px;background:#d9d9d9"></div>
<svg class="a" style="left:23px;top:495px" width="11" height="9"><rect x="0.5" y="0.5" width="8" height="8" rx="1" fill="#e9e9e9" stroke="#a9a9a9"/><path d="M2 4.5H7M4.5 2V7" stroke="#8b93ad"/><path d="M9 4.5H11" stroke="#9a9a9a" stroke-dasharray="1 1"/></svg>
<div class="tv" style="left:36.4px;top:494px">Electric power</div>
<div class="a" style="left:34px;top:527px;width:507px;height:1px;background:#d9d9d9"></div>
<svg class="a" style="left:23px;top:514px" width="11" height="9"><rect x="0.5" y="0.5" width="8" height="8" rx="1" fill="#e9e9e9" stroke="#a9a9a9"/><path d="M2 4.5H7M4.5 2V7" stroke="#8b93ad"/><path d="M9 4.5H11" stroke="#9a9a9a" stroke-dasharray="1 1"/></svg>
<div class="tv" style="left:36.4px;top:513px">Fences</div>
<div class="a" style="left:34px;top:546px;width:507px;height:1px;background:#d9d9d9"></div>
<svg class="a" style="left:23px;top:533px" width="11" height="9"><rect x="0.5" y="0.5" width="8" height="8" rx="1" fill="#e9e9e9" stroke="#a9a9a9"/><path d="M2 4.5H7M4.5 2V7" stroke="#8b93ad"/><path d="M9 4.5H11" stroke="#9a9a9a" stroke-dasharray="1 1"/></svg>
<div class="tv" style="left:36.4px;top:532px">Fire prevention</div>
<div class="a" style="left:34px;top:565px;width:507px;height:1px;background:#d9d9d9"></div>
<svg class="a" style="left:23px;top:552px" width="11" height="9"><rect x="0.5" y="0.5" width="8" height="8" rx="1" fill="#e9e9e9" stroke="#a9a9a9"/><path d="M2 4.5H7M4.5 2V7" stroke="#8b93ad"/><path d="M9 4.5H11" stroke="#9a9a9a" stroke-dasharray="1 1"/></svg>
<div class="tv" style="left:36.4px;top:551px">Floors</div>
<div class="a" style="left:34px;top:584px;width:507px;height:1px;background:#d9d9d9"></div>
<svg class="a" style="left:23px;top:571px" width="11" height="9"><rect x="0.5" y="0.5" width="8" height="8" rx="1" fill="#e9e9e9" stroke="#a9a9a9"/><path d="M2 4.5H7M4.5 2V7" stroke="#8b93ad"/><path d="M9 4.5H11" stroke="#9a9a9a" stroke-dasharray="1 1"/></svg>
<div class="tv" style="left:36.4px;top:570px">Garages</div>
<div class="a" style="left:34px;top:603px;width:507px;height:1px;background:#d9d9d9"></div>
<svg class="a" style="left:23px;top:590px" width="11" height="9"><rect x="0.5" y="0.5" width="8" height="8" rx="1" fill="#e9e9e9" stroke="#a9a9a9"/><path d="M2 4.5H7M4.5 2V7" stroke="#8b93ad"/><path d="M9 4.5H11" stroke="#9a9a9a" stroke-dasharray="1 1"/></svg>
<div class="tv" style="left:36.4px;top:589px">Gates</div>
<div class="a" style="left:34px;top:622px;width:507px;height:1px;background:#d9d9d9"></div>
<svg class="a" style="left:23px;top:609px" width="11" height="9"><rect x="0.5" y="0.5" width="8" height="8" rx="1" fill="#e9e9e9" stroke="#a9a9a9"/><path d="M2 4.5H7M4.5 2V7" stroke="#8b93ad"/><path d="M9 4.5H11" stroke="#9a9a9a" stroke-dasharray="1 1"/></svg>
<div class="tv" style="left:36.4px;top:608px">Glazing</div>
<div class="a" style="left:34px;top:641px;width:507px;height:1px;background:#d9d9d9"></div>
<svg class="a" style="left:23px;top:628px" width="11" height="9"><rect x="0.5" y="0.5" width="8" height="8" rx="1" fill="#e9e9e9" stroke="#a9a9a9"/><path d="M2 4.5H7M4.5 2V7" stroke="#8b93ad"/><path d="M9 4.5H11" stroke="#9a9a9a" stroke-dasharray="1 1"/></svg>
<div class="tv" style="left:36.4px;top:627px">Gutters</div>
<div class="a" style="left:34px;top:660px;width:507px;height:1px;background:#d9d9d9"></div>
<svg class="a" style="left:23px;top:647px" width="11" height="9"><rect x="0.5" y="0.5" width="8" height="8" rx="1" fill="#e9e9e9" stroke="#a9a9a9"/><path d="M2 4.5H7M4.5 2V7" stroke="#8b93ad"/><path d="M9 4.5H11" stroke="#9a9a9a" stroke-dasharray="1 1"/></svg>
<div class="tv" style="left:36.4px;top:646px">Heating</div>
<div class="a" style="left:34px;top:679px;width:507px;height:1px;background:#d9d9d9"></div>
<svg class="a" style="left:23px;top:666px" width="11" height="9"><rect x="0.5" y="0.5" width="8" height="8" rx="1" fill="#e9e9e9" stroke="#a9a9a9"/><path d="M2 4.5H7M4.5 2V7" stroke="#8b93ad"/><path d="M9 4.5H11" stroke="#9a9a9a" stroke-dasharray="1 1"/></svg>
<div class="tv" style="left:36.4px;top:665px">Independent living</div>
<div class="a" style="left:34px;top:698px;width:507px;height:1px;background:#d9d9d9"></div>
<svg class="a" style="left:23px;top:685px" width="11" height="9"><rect x="0.5" y="0.5" width="8" height="8" rx="1" fill="#e9e9e9" stroke="#a9a9a9"/><path d="M2 4.5H7M4.5 2V7" stroke="#8b93ad"/><path d="M9 4.5H11" stroke="#9a9a9a" stroke-dasharray="1 1"/></svg>
<div class="tv" style="left:36.4px;top:684px">Kitchen sink</div>
<div class="a" style="left:34px;top:717px;width:507px;height:1px;background:#d9d9d9"></div>
<svg class="a" style="left:23px;top:704px" width="11" height="9"><rect x="0.5" y="0.5" width="8" height="8" rx="1" fill="#e9e9e9" stroke="#a9a9a9"/><path d="M2 4.5H7M4.5 2V7" stroke="#8b93ad"/><path d="M9 4.5H11" stroke="#9a9a9a" stroke-dasharray="1 1"/></svg>
<div class="tv" style="left:36.4px;top:703px">Kitchen units</div>
<div class="a" style="left:34px;top:736px;width:507px;height:1px;background:#d9d9d9"></div>
<svg class="a" style="left:23px;top:723px" width="11" height="9"><rect x="0.5" y="0.5" width="8" height="8" rx="1" fill="#e9e9e9" stroke="#a9a9a9"/><path d="M2 4.5H7M4.5 2V7" stroke="#8b93ad"/><path d="M9 4.5H11" stroke="#9a9a9a" stroke-dasharray="1 1"/></svg>
<div class="tv" style="left:36.4px;top:722px">Locks and fittings</div>
<div class="a" style="left:34px;top:755px;width:507px;height:1px;background:#d9d9d9"></div>
<svg class="a" style="left:23px;top:742px" width="11" height="9"><rect x="0.5" y="0.5" width="8" height="8" rx="1" fill="#e9e9e9" stroke="#a9a9a9"/><path d="M2 4.5H7M4.5 2V7" stroke="#8b93ad"/><path d="M9 4.5H11" stroke="#9a9a9a" stroke-dasharray="1 1"/></svg>
<div class="tv" style="left:36.4px;top:741px">Paths and steps</div>
<div class="a" style="left:34px;top:774px;width:507px;height:1px;background:#d9d9d9"></div>
<svg class="a" style="left:23px;top:761px" width="11" height="9"><rect x="0.5" y="0.5" width="8" height="8" rx="1" fill="#e9e9e9" stroke="#a9a9a9"/><path d="M2 4.5H7M4.5 2V7" stroke="#8b93ad"/><path d="M9 4.5H11" stroke="#9a9a9a" stroke-dasharray="1 1"/></svg>
<div class="tv" style="left:36.4px;top:760px">Pests</div>
<div class="a" style="left:34px;top:793px;width:507px;height:1px;background:#d9d9d9"></div>
<svg class="a" style="left:23px;top:780px" width="11" height="9"><rect x="0.5" y="0.5" width="8" height="8" rx="1" fill="#e9e9e9" stroke="#a9a9a9"/><path d="M2 4.5H7M4.5 2V7" stroke="#8b93ad"/><path d="M9 4.5H11" stroke="#9a9a9a" stroke-dasharray="1 1"/></svg>
<div class="tv" style="left:36.4px;top:779px">Pipes</div>
<div class="gb" style="left:563px;top:184px;width:1111px;height:620px"></div>
<svg class="a" style="left:575px;top:203px" width="16" height="16" viewBox="0 0 17 17"><circle cx="8.5" cy="8.5" r="7.8" fill="#bdbdbd" stroke="#aaaaaa" stroke-width="0.8"/><circle cx="8.5" cy="7" r="6" fill="#cfcfcf" opacity="0.6"/><path d="M8.5 4.4V12.6M4.4 8.5H12.6" stroke="#ededed" stroke-width="2.4"/></svg>
<div class="tb" style="left:572.5px;top:221px;color:#7f7f7f">Add</div>
<svg class="a" style="left:610px;top:204px" width="14" height="14" viewBox="0.5 1 14.5 14"><path d="M1 1.5H14.5V14.5H2.5L1 13Z" fill="#a8a8a8" stroke="#8e8e8e" stroke-width="0.8"/><rect x="3.5" y="1.8" width="8.5" height="6" fill="#e4e4e4"/><rect x="4.5" y="10" width="7" height="4.4" fill="#8c8c8c"/><rect x="5.6" y="10.8" width="2" height="3" fill="#d9d9d9"/></svg>
<div class="tb" style="left:605.5px;top:221px;color:#7f7f7f">Save</div>
<svg class="a" style="left:642.6px;top:203.6px" width="14.2" height="14.6" viewBox="0.6 0.4 14.8 15.4"><path d="M4.6 7V4.6A3.4 3.4 0 0 1 11.4 4.6V7" fill="none" stroke="#b98a1e" stroke-width="1.7"/><rect x="1.6" y="6.6" width="12.8" height="8.6" rx="1.2" fill="#f2c33a" stroke="#a8780f" stroke-width="0.9"/><rect x="2.6" y="7.6" width="10.8" height="2.4" fill="#fbe38a" opacity="0.8"/><path d="M8 9.4L10 11.6H6Z" fill="#5a3c05"/><rect x="7.2" y="11.4" width="1.6" height="2.2" fill="#5a3c05"/></svg>
<div class="tb" style="left:641px;top:221px;color:#000">Edit</div>
<svg class="a" style="left:684px;top:203.5px" width="16" height="16" viewBox="0 0 16 16"><path d="M4.2 6.4C6.2 3.2 11 3.4 12 7C12.8 10 10.4 12.2 7.6 12.8" fill="none" stroke="#9a9a9a" stroke-width="1.5"/><path d="M2.4 2.4L3 8.6L8.6 6.8Z" fill="#9a9a9a"/></svg>
<div class="tb" style="left:671.5px;top:221px;color:#7f7f7f">Restore</div>
<div class="a" style="left:720px;top:205px;width:1px;height:29px;background:#e8e6da"></div>
<svg class="a" style="left:735px;top:203px" width="16" height="16" viewBox="0 0 16 16"><path d="M2.5 2.5L13.5 13.5M13.5 2.5L2.5 13.5" stroke="#a6a6a6" stroke-width="1.3"/></svg>
<div class="tb" style="left:727.5px;top:221px;color:#7f7f7f">Delete</div>
<div class="a" style="left:770px;top:205px;width:1px;height:29px;background:#e8e6da"></div>
<svg class="a" style="left:797px;top:203px" width="17" height="16" viewBox="0 0 17 16"><g fill="#d2d2d2" stroke="#9a9a9a" stroke-width="0.9"><rect x="0.8" y="5.6" width="4.4" height="4.4"/><rect x="10.6" y="0.6" width="5.6" height="4.4"/><rect x="10.6" y="10.4" width="5.6" height="4.4"/></g><path d="M5.2 7.8H8M8 2.8V12.6M8 2.8H10.6M8 7.8H10.6M8 12.6H10.6" fill="none" stroke="#9a9a9a" stroke-width="0.9"/></svg>
<div class="tb" style="left:777.5px;top:221px;color:#7f7f7f">References</div>
<div class="a" style="left:569px;top:237px;width:1101px;height:1px;background:#e6ebf2"></div>
<div class="a" style="left:1669px;top:203px;width:1px;height:34px;background:#e6ebf2"></div>
<svg class="a" style="left:1605px;top:202px" width="16" height="16" viewBox="0 0 16 16"><path d="M2.8 1.2H10L13.4 4.6V15H2.8Z" fill="#fdfdfd" stroke="#8e8e8e" stroke-width="0.8"/><path d="M10 1.2V4.6H13.4" fill="#dcdcdc" stroke="#8e8e8e" stroke-width="0.7"/><path d="M13.6 5V15.2H3.4" fill="none" stroke="#3b3b3b" stroke-width="0.9"/></svg>
<div class="tb" style="left:1593px;top:221px;color:#000;letter-spacing:0.35px">Editing</div>
<svg class="a" style="left:1644px;top:203px" width="16" height="16" viewBox="0 0 16 16">
<defs><linearGradient id="h16g" x1="0" y1="0" x2="0" y2="1"><stop offset="0" stop-color="#1a2f7a"/><stop offset="0.18" stop-color="#0a63b0"/><stop offset="1" stop-color="#0a63b0"/></linearGradient>
<clipPath id="h16c"><circle cx="8.05" cy="7.95" r="6.85"/></clipPath></defs>
<circle cx="8.05" cy="7.95" r="7.6" fill="#fefefe"/>
<circle cx="8.05" cy="7.95" r="6.85" fill="url(#h16g)"/>
<g clip-path="url(#h16c)"><ellipse cx="8.05" cy="9.45" rx="7.5" ry="2.75" fill="#2f86c8" opacity="0.75"/>
<ellipse cx="8.05" cy="11.45" rx="6.5" ry="3.5" fill="#0a63b0"/>
<ellipse cx="8.05" cy="5.95" rx="6.15" ry="4.3" fill="#4668ad" opacity="0.95"/>
<circle cx="8.05" cy="7.95" r="6.6499999999999995" fill="none" stroke="#1a2f7a" stroke-width="0.45" opacity="0.55"/></g>
<text x="8.15" y="13.1" text-anchor="middle" font-family="Liberation Sans, sans-serif" font-weight="bold" font-size="14.2" fill="#fff" stroke="#fff" stroke-width="0.25" transform="translate(8.15 0) scale(0.92 1) translate(-8.15 0)">?</text></svg>
<div class="tb" style="left:1639px;top:221px;color:#000;letter-spacing:0.4px">Help</div>
<div class="t" style="left:574px;top:243px;font-size:15px;font-weight:bold;letter-spacing:0">Master / Video Call / Start Video Call</div>
<div class="gb" style="left:572px;top:283px;width:1093px;height:258px"></div>
<div class="t" style="left:576px;top:276px;font-size:14px;background:#bfd1ea;padding:0 5px 0 2px;height:15px">Video Call Properties</div>
<div class="t" style="right:996px;top:317px;font-size:14px">Admin Display</div>
<div class="inp" style="left:703px;top:311px;width:887px;height:23px;padding:4px 0 0 1px;border-color:#5c5c5c">Start Video Call</div>
<div class="t" style="right:996px;top:356px;font-size:14px">Operator Display</div>
<div class="inp" style="left:703px;top:350px;width:887px;height:23px;padding:4px 0 0 1px;border-color:#5c5c5c">Start Video Call</div>
<div class="t" style="right:996px;top:394px;font-size:14px">Full Name</div>
<div class="inp" style="left:703px;top:385px;width:324px;height:25px;padding:4px 0 0 1px;border-color:#6b6b6b #f6f6f6 #f6f6f6 #6b6b6b;box-shadow:inset 1px 1px 0 #9d9d9d">{Import.CallerId}</div>
<div class="btn" style="left:1040px;top:387px;width:36px;height:26px;font-size:13px;line-height:27px;border:2px solid #707070">...</div>
<div class="t" style="right:996px;top:433px;font-size:14px">Email</div>
<div class="inp" style="left:703px;top:424px;width:324px;height:25px;padding:4px 0 0 1px;border-color:#6b6b6b #f6f6f6 #f6f6f6 #6b6b6b;box-shadow:inset 1px 1px 0 #9d9d9d">{Import.CallerEmail}</div>
<div class="btn" style="left:1040px;top:426px;width:36px;height:26px;font-size:13px;line-height:29px;border:1px solid #a3a3a3">...</div>
<div class="t" style="right:996px;top:472px;font-size:14px">Mobile</div>
<div class="inp" style="left:703px;top:463px;width:324px;height:25px;padding:4px 0 0 1px;border-color:#6b6b6b #f6f6f6 #f6f6f6 #6b6b6b;box-shadow:inset 1px 1px 0 #9d9d9d">{Import.MobileTelNo}</div>
<div class="btn" style="left:1040px;top:465px;width:36px;height:26px;font-size:13px;line-height:29px;border:1px solid #a3a3a3">...</div>
<div class="a" style="left:703px;top:510px;width:13px;height:13px;border:1px solid #666;border-radius:3px;background:#f3f3f3"></div>
<div class="t" style="left:722px;top:511px;font-size:14px">Mandatory</div>
<svg class="a" style="left:1036px;top:510px" width="13" height="13"><rect width="13" height="13" rx="2.5" fill="#0f64c0"/><path d="M3 6.8L5.5 9.2L10 4.2" fill="none" stroke="#fff" stroke-width="1.3"/></svg>
<div class="t" style="left:1055px;top:511px;font-size:14px">Record value</div>
<div class="a" style="left:1152.6px;top:237px;width:320.8px;height:427.2px;border-radius:8px;background:#bfd1ea;box-shadow:0 0 0 1px rgba(40,50,70,0.12),0 15px 30px rgba(15,20,35,0.29),0 30px 54px -14px rgba(15,20,35,0.2);overflow:hidden">
<div class="a" style="left:0;top:0;width:321px;height:30.2px;background:#f9eef0"></div></div>
<svg class="a" style="left:1162px;top:245px" width="14" height="13" viewBox="0 0 14 13"><rect x="0.5" y="0.5" width="13" height="12" fill="#f4f4f4" stroke="#a8a8a8" stroke-width="0.8"/><rect x="5.4" y="1.2" width="7.4" height="5.8" fill="#f6b73c" stroke="#d18a12" stroke-width="0.7"/><rect x="1.6" y="4.6" width="3.6" height="3.8" fill="#e0382c"/><rect x="5.8" y="8" width="3.8" height="3.6" fill="#3c78d8"/></svg>
<div class="t" style="left:1182px;top:246px;font-size:11.6px;color:#000">Full Name Data Source</div>
<svg class="a" style="left:1452px;top:245.3px" width="12" height="12"><path d="M1 1L11 11M11 1L1 11" stroke="#111" stroke-width="1.1"/></svg>
<div class="gb" style="left:1161px;top:282px;width:304px;height:343px;border-color:#d9dde2"></div>
<div class="dr" style="left:1164px;top:277px;background:#bfd1ea;padding:0 3px 0 2px;height:12px;letter-spacing:-0.1px">Data Sources</div>
<div class="a" style="left:1164px;top:291px;width:298px;height:331px;background:#fff;border:1px solid #828790"></div>
<div class="a" style="left:1183px;top:292px;width:278px;height:19px;border-left:1px solid #d9d9e2;border-bottom:1px solid #d9d9e2"></div>
<div class="dr" style="left:1186.5px;top:296px">Company</div>
<svg class="a" style="left:1172px;top:297px" width="5" height="8"><path d="M0.5 0.5L4.5 4L0.5 7.5Z" fill="#8a8a8a"/></svg>
<div class="a" style="left:1183px;top:311px;width:278px;height:19px;border-left:1px solid #d9d9e2;border-bottom:1px solid #d9d9e2"></div>
<div class="dr" style="left:1186.5px;top:315px">Import</div>
<svg class="a" style="left:1169.5px;top:319px" width="8" height="5"><path d="M0.5 0.5H7.5L4 4.5Z" fill="#8a8a8a"/></svg>
<div class="a" style="left:1201px;top:330px;width:260px;height:19px;border-left:1px solid #d9d9e2;border-bottom:1px solid #d9d9e2"></div>
<div class="dr" style="left:1204.5px;top:334px">AssetID</div>
<div class="a" style="left:1201px;top:349px;width:260px;height:19px;border-left:1px solid #d9d9e2;border-bottom:1px solid #d9d9e2"></div>
<div class="dr" style="left:1204.5px;top:353px">CallerEmail</div>
<div class="a" style="left:1202px;top:349px;width:258px;height:18px;border:1px dotted #000"></div>
<div class="a" style="left:1201px;top:368px;width:260px;height:19px;border-left:1px solid #d9d9e2;border-bottom:1px solid #d9d9e2"></div>
<div class="dr" style="left:1204.5px;top:372px">CallerId</div>
<div class="a" style="left:1201px;top:387px;width:260px;height:19px;border-left:1px solid #d9d9e2;border-bottom:1px solid #d9d9e2"></div>
<div class="dr" style="left:1204.5px;top:391px">ContTelNo</div>
<div class="a" style="left:1201px;top:406px;width:260px;height:19px;border-left:1px solid #d9d9e2;border-bottom:1px solid #d9d9e2"></div>
<div class="dr" style="left:1204.5px;top:410px">HomeTelNo</div>
<div class="a" style="left:1201px;top:425px;width:260px;height:19px;border-left:1px solid #d9d9e2;border-bottom:1px solid #d9d9e2"></div>
<div class="dr" style="left:1204.5px;top:429px">MobileTelNo</div>
<div class="a" style="left:1201px;top:444px;width:260px;height:19px;border-left:1px solid #d9d9e2;border-bottom:1px solid #d9d9e2"></div>
<div class="dr" style="left:1204.5px;top:448px">Notes</div>
<div class="a" style="left:1201px;top:463px;width:260px;height:19px;border-left:1px solid #d9d9e2;border-bottom:1px solid #d9d9e2"></div>
<div class="dr" style="left:1204.5px;top:467px">Tenancy</div>
<div class="a" style="left:1201px;top:482px;width:260px;height:19px;border-left:1px solid #d9d9e2;border-bottom:1px solid #d9d9e2"></div>
<div class="dr" style="left:1204.5px;top:486px">TenantText</div>
<svg class="a" style="left:1190px;top:487px" width="5" height="8"><path d="M0.5 0.5L4.5 4L0.5 7.5Z" fill="#8a8a8a"/></svg>
<div class="a" style="left:1201px;top:501px;width:260px;height:19px;border-left:1px solid #d9d9e2;border-bottom:1px solid #d9d9e2"></div>
<div class="dr" style="left:1204.5px;top:505px">UserCode</div>
<div class="a" style="left:1201px;top:520px;width:260px;height:19px;border-left:1px solid #d9d9e2;border-bottom:1px solid #d9d9e2"></div>
<div class="dr" style="left:1204.5px;top:524px">WorkTelNo</div>
<div class="a" style="left:1183px;top:539px;width:278px;height:19px;border-left:1px solid #d9d9e2;border-bottom:1px solid #d9d9e2"></div>
<div class="dr" style="left:1186.5px;top:543px">Script</div>
<svg class="a" style="left:1172px;top:544px" width="5" height="8"><path d="M0.5 0.5L4.5 4L0.5 7.5Z" fill="#8a8a8a"/></svg>
<div class="a" style="left:1183px;top:558px;width:278px;height:19px;border-left:1px solid #d9d9e2;border-bottom:1px solid #d9d9e2"></div>
<div class="dr" style="left:1186.5px;top:562px">SQL</div>
<svg class="a" style="left:1172px;top:563px" width="5" height="8"><path d="M0.5 0.5L4.5 4L0.5 7.5Z" fill="#8a8a8a"/></svg>
<div class="btn" style="left:1161px;top:631px;width:75px;height:25px;font-size:11px;letter-spacing:-0.3px;line-height:23px;color:#000;padding-right:3px;border-color:#7d7d7d">Cancel</div>
<div class="btn" style="left:1312px;top:631px;width:43px;height:25px;font-size:11px;letter-spacing:-0.3px;line-height:23px;color:#000;padding-right:3px;border-color:#7d7d7d">Clear</div>
<div class="btn" style="left:1373px;top:631px;width:92px;height:25px;font-size:11px;letter-spacing:-0.3px;line-height:23px;color:#000;padding-right:3px;border-color:#7d7d7d">Select &amp; Close</div>
<svg class="a" style="left:1462px;top:653px" width="10" height="10"><g fill="#b4bfce"><rect x="7" y="1" width="2" height="2"/><rect x="7" y="4" width="2" height="2"/><rect x="4" y="4" width="2" height="2"/><rect x="7" y="7" width="2" height="2"/><rect x="4" y="7" width="2" height="2"/><rect x="1" y="7" width="2" height="2"/></g></svg>
<svg class="a" style="left:1301px;top:100px" width="14" height="22" viewBox="0 0 14 22"><path d="M1 1V17L5 13.5L8 20L10.5 19L7.6 12.6H12.5Z" fill="#fff" stroke="#000" stroke-width="1" stroke-linejoin="round"/></svg>
</body></html>
